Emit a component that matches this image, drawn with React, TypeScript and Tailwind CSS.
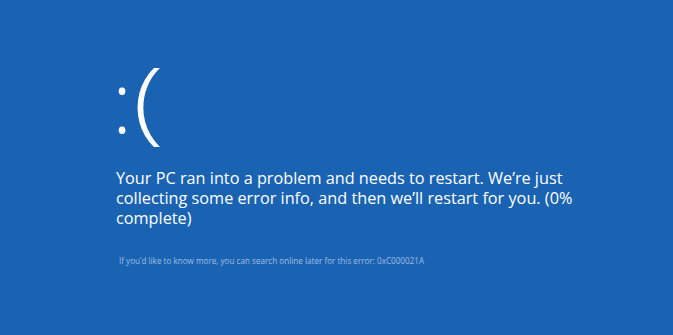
export default function App() {
  return (
    <div className="w-[673px] h-[335px] bg-[#1a63b3] text-white overflow-hidden font-['Open_Sans',sans-serif]">
      <div className="pl-[116px] pt-[46px]">
        <div className="flex items-baseline h-[104px] font-light leading-[104px]">
          <span className="text-[84px] -ml-[4px]">:</span>
          <span className="text-[90px] ml-[4px] inline-block scale-x-[1.25]">(</span>
        </div>
        <p className="mt-[18px] w-[460px] text-[16.25px] leading-[20px]">
          Your PC ran into a problem and needs to restart. We’re just collecting some error info, and then we’ll restart for you. (0% complete)
        </p>
        <p className="mt-[27px] pl-[3px] text-[8.15px] text-[#a0bde3]">
          If you’d like to know more, you can search online later for this error: 0xC000021A
        </p>
      </div>
    </div>
  );
}
